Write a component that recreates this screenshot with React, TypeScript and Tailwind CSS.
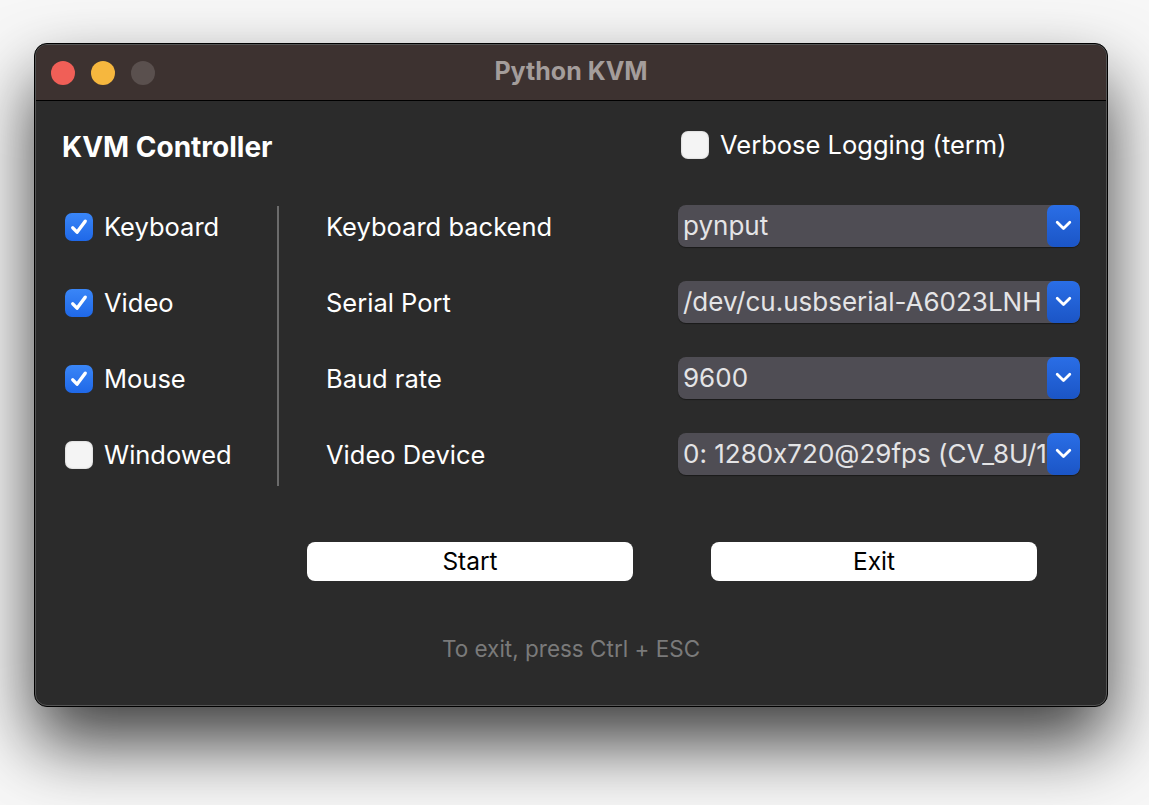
import React from "react";

function CheckBox({ checked }: { checked: boolean }) {
  if (!checked) {
    return <div className="w-[28px] h-[28px] rounded-[7px] bg-[#f4f4f4] shadow-[inset_0_0_2px_rgba(0,0,0,0.25)] shrink-0" />;
  }
  return (
    <div className="w-[28px] h-[28px] rounded-[7px] bg-gradient-to-b from-[#3a86f7] to-[#1f68e8] flex items-center justify-center shrink-0">
      <svg width="20" height="20" viewBox="0 0 20 20" fill="none">
        <path d="M3.8 10.8 L8 15.2 L16.2 4.2" stroke="white" strokeWidth="3.4" strokeLinecap="round" strokeLinejoin="round" />
      </svg>
    </div>
  );
}

function Select({ value }: { value: string }) {
  return (
    <div className="relative w-[402px] h-[42px] rounded-[8px] bg-[#4f4d54] flex items-center overflow-hidden shadow-[0_1px_1px_rgba(0,0,0,0.4)] -mt-[3px]">
      <div className="pl-[5px] text-[26px] text-[#e4e4e6] whitespace-nowrap">{value}</div>
      <div className="absolute right-0 top-0 w-[33px] h-[42px] rounded-[7px] bg-gradient-to-b from-[#2a6ee6] to-[#1b55c6] flex items-center justify-center">
        <svg width="17" height="11" viewBox="0 0 17 11" fill="none">
          <path d="M2.2 2.2 L8.5 8.5 L14.8 2.2" stroke="white" strokeWidth="2.8" strokeLinecap="round" strokeLinejoin="round" />
        </svg>
      </div>
    </div>
  );
}

const checks = [
  { label: "Keyboard", checked: true },
  { label: "Video", checked: true },
  { label: "Mouse", checked: true },
  { label: "Windowed", checked: false },
];

const fields = [
  { label: "Keyboard backend", value: "pynput" },
  { label: "Serial Port", value: "/dev/cu.usbserial-A6023LNH" },
  { label: "Baud rate", value: "9600" },
  { label: "Video Device", value: "0: 1280x720@29fps (CV_8U/1)" },
];

export default function App() {
  return (
    <div className="w-[1149px] h-[805px] bg-[#f7f7f7] pt-[43px] pl-[34px] overflow-hidden [font-feature-settings:'calt'_0]" style={{ fontFamily: "Inter, 'Liberation Sans', sans-serif" }}>
      {/* Window */}
      <div className="w-[1074px] h-[664px] rounded-[13px] border border-black bg-[#2b2b2b] shadow-[0_36px_70px_rgba(0,0,0,0.75)] flex flex-col overflow-hidden">
        <div className="rounded-[12px] border border-[#555] flex flex-col flex-1 overflow-hidden">
          {/* Title bar */}
          <div className="h-[56px] bg-[#3d3230] border-b border-black flex items-center relative shrink-0">
            <div className="flex items-center gap-[16px] pl-[15px]">
              <div className="w-[24px] h-[24px] rounded-full bg-[#f05f57]" />
              <div className="w-[24px] h-[24px] rounded-full bg-[#f6b73e]" />
              <div className="w-[24px] h-[24px] rounded-full bg-[#5a504e]" />
            </div>
            <div className="absolute inset-0 flex items-center justify-center text-[25px] font-bold text-[#a49d9b] pb-[2px]">Python KVM</div>
          </div>

          {/* Body */}
          <div className="flex-1 flex flex-col px-[26px]">
            <div className="h-[50px] mt-[19px] flex items-center">
              <div className="w-[619px] text-[28px] font-bold text-white pt-[3px]">KVM Controller</div>
              <div className="flex items-center gap-[11px]">
                <CheckBox checked={false} />
                <span className="text-[25.5px] text-white">Verbose Logging (term)</span>
              </div>
            </div>

            <div className="mt-[36px] flex">
              <div className="w-[215px] flex flex-col gap-[34px] pl-[3px]">
                {checks.map((c) => (
                  <div key={c.label} className="h-[42px] flex items-center gap-[11px]">
                    <CheckBox checked={c.checked} />
                    <span className="text-[25.5px] text-white">{c.label}</span>
                  </div>
                ))}
              </div>
              <div className="w-[2px] h-[280px] bg-[#6b6b6b]" />
              <div className="pl-[47px] flex flex-col gap-[34px]">
                {fields.map((f) => (
                  <div key={f.label} className="h-[42px] flex items-center">
                    <div className="w-[352px] text-[25.5px] text-white">{f.label}</div>
                    <Select value={f.value} />
                  </div>
                ))}
              </div>
            </div>

            <div className="mt-[56px] ml-[245px] flex gap-[78px]">
              <button className="w-[326px] h-[39px] rounded-[8px] bg-white text-black text-[24.5px] flex items-center justify-center">Start</button>
              <button className="w-[326px] h-[39px] rounded-[8px] bg-white text-black text-[24.5px] flex items-center justify-center">Exit</button>
            </div>

            <div className="mt-[53px] text-center text-[22.5px] text-[#7a7a7a] leading-[30px]">To exit, press Ctrl + ESC</div>
          </div>
        </div>
      </div>
    </div>
  );
}
